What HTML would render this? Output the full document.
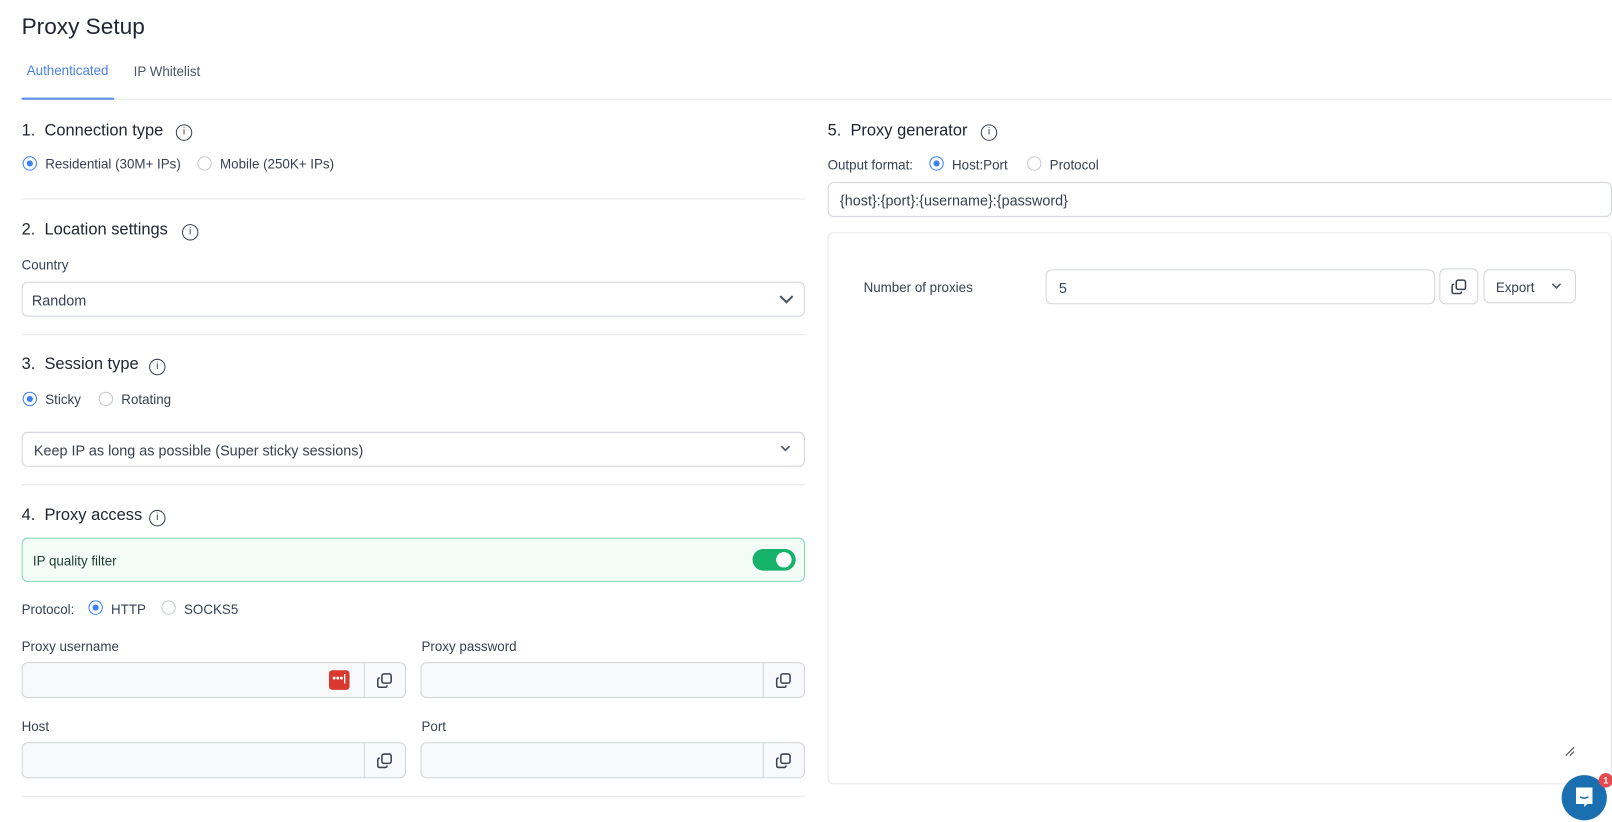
<!DOCTYPE html>
<html><head><meta charset="utf-8"><style>
*{box-sizing:border-box;margin:0;padding:0}
body{width:1612px;height:822px;background:#fff;font-family:"Liberation Sans",sans-serif;color:#1f2937;position:relative;overflow:hidden}
#w{position:absolute;left:0;top:0;width:1568px;height:800px;transform:scale(1.02806);transform-origin:0 0}
.a{position:absolute}
.h1{font-size:22px;color:#1f2430}
.h2{font-size:16px;color:#1f2430}
.t{font-size:13px;color:#374151}
.sep{position:absolute;height:1px;background:#e5e7eb}
.radio{position:absolute;width:14px;height:14px;border:1px solid #c4c8ce;border-radius:50%;background:#fff}
.radio.on{border-color:#3b82f6}
.radio.on:after{content:"";position:absolute;left:3px;top:3px;width:6px;height:6px;border-radius:50%;background:#3b82f6}
.info{position:absolute;width:16px;height:16px;border:1.3px solid #374151;border-radius:50%;font-size:10px;text-align:center;line-height:14px;color:#374151}
.box{position:absolute;border:1px solid #d1d5db;border-radius:6px;background:#fff}
.gray{background:#f8f9fb}
.copy{position:absolute;width:16px;height:16px}
</style></head><body><div id="w">
<div class="a h1" style="left:21px;top:13px">Proxy Setup</div>
<div class="a t" style="left:26px;top:61px;color:#4a7fe0">Authenticated</div>
<div class="a t" style="left:130px;top:62px;color:#4b5563">IP Whitelist</div>
<div class="sep" style="left:21px;top:96px;width:1591px"></div>
<div class="a" style="left:21px;top:95px;width:90px;height:2px;background:#5b8def"></div>

<div class="a h2" style="left:21px;top:119px">1.&nbsp; Connection type</div>
<div class="info" style="left:171px;top:121px">i</div>
<div class="radio on" style="left:22px;top:152px"></div><div class="a t" style="left:44px;top:152px">Residential (30M+ IPs)</div>
<div class="radio" style="left:192px;top:152px"></div><div class="a t" style="left:214px;top:152px">Mobile (250K+ IPs)</div>
<div class="sep" style="left:21px;top:193px;width:762px"></div>

<div class="a h2" style="left:21px;top:215px">2.&nbsp; Location settings</div>
<div class="info" style="left:177px;top:218px">i</div>
<div class="a t" style="left:21px;top:250px">Country</div>
<div class="box" style="left:21px;top:274px;width:762px;height:34px"></div>
<div class="a" style="left:31px;top:284px;font-size:14px;color:#374151">Random</div>
<svg class="a" style="left:757px;top:285px" width="16" height="12"><path d="M2 3l6 6 6-6" stroke="#4b5563" stroke-width="2" fill="none"/></svg>
<div class="sep" style="left:21px;top:325px;width:762px"></div>

<div class="a h2" style="left:21px;top:346px">3.&nbsp; Session type</div>
<div class="info" style="left:145px;top:349px">i</div>
<div class="radio on" style="left:22px;top:381px"></div><div class="a t" style="left:44px;top:381px">Sticky</div>
<div class="radio" style="left:96px;top:381px"></div><div class="a t" style="left:118px;top:381px">Rotating</div>
<div class="box" style="left:21px;top:420px;width:762px;height:34px"></div>
<div class="a" style="left:33px;top:430px;font-size:14px;color:#374151">Keep IP as long as possible (Super sticky sessions)</div>
<svg class="a" style="left:758px;top:432px" width="12" height="9"><path d="M2 2l4 4 4-4" stroke="#4b5563" stroke-width="1.6" fill="none"/></svg>
<div class="sep" style="left:21px;top:471px;width:762px"></div>

<div class="a h2" style="left:21px;top:493px">4.&nbsp; Proxy access</div>
<div class="info" style="left:145px;top:496px">i</div>
<div class="box" style="left:21px;top:523px;width:762px;height:43px;border-color:#7fdcb9;background:#f3fcf7"></div>
<div class="a t" style="left:32px;top:538px;color:#1f3b2d">IP quality filter</div>
<div class="a" style="left:732px;top:534px;width:42px;height:21px;border-radius:11px;background:#17b26a"><div class="a" style="left:23px;top:3px;width:15px;height:15px;border-radius:50%;background:#fff"></div></div>
<div class="a t" style="left:21px;top:585px">Protocol:</div>
<div class="radio on" style="left:86px;top:584px"></div><div class="a t" style="left:108px;top:585px">HTTP</div>
<div class="radio" style="left:157px;top:584px"></div><div class="a t" style="left:179px;top:585px">SOCKS5</div>

<div class="a t" style="left:21px;top:621px">Proxy username</div>
<div class="a t" style="left:410px;top:621px">Proxy password</div>
<div class="box gray" style="left:21px;top:644px;width:374px;height:35px"></div>
<div class="a" style="left:354px;top:645px;width:1px;height:33px;background:#d1d5db"></div>
<div class="a" style="left:320px;top:652px;width:20px;height:19px;border-radius:3px;background:#d9382e;color:#fff;font-size:10px;text-align:center;line-height:17px;font-weight:bold">•••|</div>
<div class="box gray" style="left:409px;top:644px;width:374px;height:35px"></div>
<div class="a" style="left:742px;top:645px;width:1px;height:33px;background:#d1d5db"></div>
<div class="a t" style="left:21px;top:699px">Host</div>
<div class="a t" style="left:410px;top:699px">Port</div>
<div class="box gray" style="left:21px;top:722px;width:374px;height:35px"></div>
<div class="a" style="left:354px;top:723px;width:1px;height:33px;background:#d1d5db"></div>
<div class="box gray" style="left:409px;top:722px;width:374px;height:35px"></div>
<div class="a" style="left:742px;top:723px;width:1px;height:33px;background:#d1d5db"></div>
<svg width="0" height="0" style="position:absolute"><defs><g id="cp"><rect x="5.5" y="1.5" width="9" height="9" rx="2" fill="none" stroke="#374151" stroke-width="1.5"/><path d="M3.5 5.5h-0.5a1.5 1.5 0 0 0-1.5 1.5v6a1.5 1.5 0 0 0 1.5 1.5h6a1.5 1.5 0 0 0 1.5-1.5v-0.5" fill="none" stroke="#374151" stroke-width="1.5"/></g></defs></svg>
<svg class="copy" style="left:366px;top:654px"><use href="#cp"/></svg>
<svg class="copy" style="left:754px;top:654px"><use href="#cp"/></svg>
<svg class="copy" style="left:366px;top:732px"><use href="#cp"/></svg>
<svg class="copy" style="left:754px;top:732px"><use href="#cp"/></svg>
<div class="sep" style="left:21px;top:774px;width:762px"></div>

<div class="a h2" style="left:805px;top:119px">5.&nbsp; Proxy generator</div>
<div class="info" style="left:954px;top:121px">i</div>
<div class="a t" style="left:805px;top:153px">Output format:</div>
<div class="radio on" style="left:904px;top:152px"></div><div class="a t" style="left:926px;top:153px">Host:Port</div>
<div class="radio" style="left:999px;top:152px"></div><div class="a t" style="left:1021px;top:153px">Protocol</div>
<div class="box" style="left:805px;top:177px;width:763px;height:34px"></div>
<div class="a" style="left:817px;top:187px;font-size:14px;color:#374151">{host}:{port}:{username}:{password}</div>
<div class="box" style="left:805px;top:226px;width:763px;height:537px;border-color:#e5e7eb"></div>
<div class="a t" style="left:840px;top:272px">Number of proxies</div>
<div class="box" style="left:1017px;top:262px;width:379px;height:34px"></div>
<div class="a" style="left:1030px;top:272px;font-size:14px;color:#374151">5</div>
<div class="box" style="left:1400px;top:261px;width:38px;height:35px"></div>
<svg class="copy" style="left:1411px;top:271px"><use href="#cp"/></svg>
<div class="box" style="left:1443px;top:262px;width:90px;height:33px"></div>
<div class="a t" style="left:1455px;top:272px">Export</div>
<svg class="a" style="left:1508px;top:274px" width="12" height="9"><path d="M2 2l4 4 4-4" stroke="#4b5563" stroke-width="1.5" fill="none"/></svg>
<svg class="a" style="left:1521px;top:725px" width="12" height="12"><path d="M2 10l8-8M6 10l4-4" stroke="#555" stroke-width="1.2"/></svg>

<div class="a" style="left:1519px;top:754px;width:44px;height:44px;border-radius:50%;background:#1a6fb0"></div>
<svg class="a" style="left:1530px;top:764px" width="22" height="24"><path d="M3 2h16v16h-5l-3 3v-3H3z" fill="#fff"/><path d="M7 11q4 3 8 0" stroke="#1a6fb0" stroke-width="1.5" fill="none"/></svg>
<div class="a" style="left:1555px;top:752px;width:14px;height:14px;border-radius:50%;background:#e5484d;color:#fff;font-size:9px;text-align:center;line-height:14px;font-weight:bold">1</div>
</div></body></html>
